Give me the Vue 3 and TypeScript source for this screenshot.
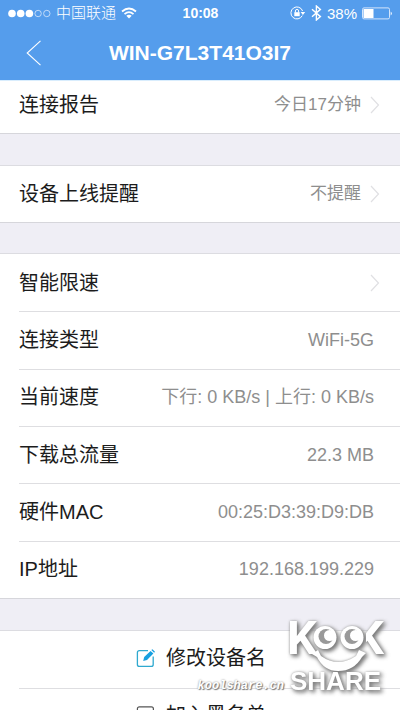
<script setup lang="ts">
interface Row {
  label: string
  value?: string
  link?: boolean
}

const groups: { name: string; rows: Row[] }[] = [
  { name: 'report', rows: [{ label: '连接报告', value: '今日17分钟', link: true }] },
  { name: 'remind', rows: [{ label: '设备上线提醒', value: '不提醒', link: true }] },
  {
    name: 'details',
    rows: [
      { label: '智能限速', link: true },
      { label: '连接类型', value: 'WiFi-5G' },
      { label: '当前速度', value: '下行: 0 KB/s | 上行: 0 KB/s' },
      { label: '下载总流量', value: '22.3 MB' },
      { label: '硬件MAC', value: '00:25:D3:39:D9:DB' },
      { label: 'IP地址', value: '192.168.199.229' },
    ],
  },
]
</script>

<template>
  <div class="screen">
    <header class="top">
      <div class="status">
        <div class="carrier">
          <svg class="dots" width="43" height="9" viewBox="0 0 43 9" aria-hidden="true">
            <g fill="#fff">
              <circle cx="4" cy="4.5" r="3.8" />
              <circle cx="12.7" cy="4.5" r="3.8" />
              <circle cx="21.4" cy="4.5" r="3.8" />
            </g>
            <g fill="none" stroke="#d9e8fb" stroke-width="0.8">
              <circle cx="30.1" cy="4.5" r="3.2" />
              <circle cx="38.8" cy="4.5" r="3.2" />
            </g>
          </svg>
          <span class="operator">中国联通</span>
          <svg width="16" height="12" viewBox="0 0 16 12" aria-hidden="true">
            <g fill="none" stroke="#fff" stroke-width="1.8">
              <path d="M1 4.5Q8-1.6 15 4.5" />
              <path d="M3.5 7.1Q8 3.2 12.5 7.1" />
            </g>
            <path d="M5.3 8.7Q8 6.6 10.7 8.7L8 11.6Z" fill="#fff" />
          </svg>
        </div>
        <time class="clock">10:08</time>
        <div class="indicators">
          <svg width="16" height="14" viewBox="0 0 16 14" aria-hidden="true">
            <path d="M12.3 9.6A6 6 0 1 1 12.6 5" fill="none" stroke="#fff" />
            <path d="M10.6 6H15.2L12.9 9Z" fill="#fff" />
            <rect x="4.3" y="6.2" width="5.4" height="4" fill="#fff" />
            <path d="M5.4 6.5V5a1.6 1.6 0 0 1 3.2 0v1.5" fill="none" stroke="#fff" />
          </svg>
          <svg class="bluetooth" width="11" height="16" viewBox="0 0 11 16" aria-hidden="true">
            <path d="M1 4.2L9.4 11.6L5.4 15V1L9.4 4.4L1 11.8" fill="none" stroke="#fff" stroke-width="1.4" />
          </svg>
          <span class="percent">38%</span>
          <svg width="31" height="13" viewBox="0 0 31 13" aria-hidden="true">
            <rect x="0.5" y="0.9" width="27" height="11" rx="1.5" fill="none" stroke="#d4e5fb" />
            <rect x="1.5" y="2" width="10" height="9" fill="#fff" />
            <path d="M28.7 4.4Q31 6.4 28.7 8.4Z" fill="#fff" />
          </svg>
        </div>
      </div>
      <div class="nav">
        <button class="back" type="button" aria-label="返回">
          <svg width="16" height="26" viewBox="0 0 16 26" aria-hidden="true">
            <path d="M14.5 0.8L1.2 13L14.5 25.2" fill="none" stroke="#fff" stroke-width="1.1" />
          </svg>
        </button>
        <h1>WIN-G7L3T41O3I7</h1>
      </div>
    </header>

    <main>
      <section v-for="group in groups" :key="group.name" class="group" :class="group.name">
        <component
          :is="row.link ? 'a' : 'div'"
          v-for="row in group.rows"
          :key="row.label"
          class="row"
          :href="row.link ? '#' : undefined"
        >
          <span class="label">{{ row.label }}</span>
          <span class="value">{{ row.value }}</span>
          <svg v-if="row.link" class="chevron" width="10" height="18" viewBox="0 0 10 18" aria-hidden="true">
            <path d="M1 1L8.5 9L1 17" fill="none" stroke="#e0e0e3" stroke-width="1.2" />
          </svg>
        </component>
      </section>

      <section class="group actions">
        <button class="action" type="button">
          <svg width="20" height="20" viewBox="0 0 20 20" aria-hidden="true">
            <path d="M12 2.6H3.4Q1.4 2.6 1.4 4.6V16.4Q1.4 18.4 3.4 18.4H15.2Q17.2 18.4 17.2 16.4V8.5" fill="none" stroke="#2fa9cf" stroke-width="1.3" />
            <path d="M7.2 12.9L8.2 9L14.6 2.9L17.4 5.6L11 11.9Z" fill="#16a0e0" />
            <path d="M15.4 2.1L16.4 1.2L19 3.7L18.1 4.8Z" fill="#16a0e0" />
          </svg>
          <span>修改设备名</span>
        </button>
        <button class="action" type="button">
          <svg width="20" height="20" viewBox="0 0 20 20" aria-hidden="true">
            <rect x="1.4" y="1.8" width="16" height="16" rx="2" fill="none" stroke="#555" stroke-width="1.2" />
            <path d="M4 5.5H5.5M7 5.5H15M4 9.5H5.5M7 9.5H15M4 13.5H5.5M7 13.5H15" stroke="#555" stroke-width="1.2" />
          </svg>
          <span>加入黑名单</span>
        </button>
      </section>
    </main>

    <div class="watermark">
      <span class="site">koolshare.cn</span>
      <svg class="brand" width="104" height="84" viewBox="0 0 104 84" role="img" aria-label="KOOK SHARE">
        <defs>
          <clipPath id="arms"><rect x="82" y="0" width="22" height="60" /></clipPath>
        </defs>
        <g fill="#fff">
          <text class="mark" x="3" y="40" font-size="47">K</text>
          <g clip-path="url(#arms)">
            <text class="mark" x="70" y="40" font-size="47">K</text>
          </g>
          <circle cx="41" cy="23.5" r="11.5" />
          <circle cx="68" cy="23.5" r="11.5" />
          <path d="M28 40L34 36L37 42Q54 54 72 42L75 36L82 39L78 43Q70 57 54 57Q40 57 33 43Z" />
          <text class="word" x="6" y="76" font-size="26">SHARE</text>
        </g>
        <circle cx="42" cy="22.5" r="7.5" fill="#999" />
        <circle cx="45.5" cy="21.5" r="5.5" fill="#fff" />
        <circle cx="68" cy="22.5" r="7.5" fill="#999" />
        <circle cx="71.5" cy="21.5" r="5.5" fill="#fff" />
      </svg>
    </div>
  </div>
</template>

<style>
body {
  margin: 0;
  background: #efeff5;
}
</style>

<style scoped>
.screen {
  position: relative;
  height: 100vh;
  overflow: hidden;
  background: #efeef5;
  color: #1c1c1c;
  font-family: "Liberation Sans", "Noto Sans CJK SC", sans-serif;
}
.top {
  background: #559dec;
  color: #fff;
}
.status {
  display: grid;
  grid-template-columns: 1fr auto 1fr;
  align-items: center;
  height: 26px;
  padding: 0 7px 0 8px;
}
.carrier,
.indicators {
  display: flex;
  align-items: center;
}
.carrier {
  gap: 5px;
}
.operator {
  font-size: 15px;
  line-height: 20px;
  font-weight: 300;
}
.clock {
  font-size: 14px;
  font-weight: 700;
}
.indicators {
  justify-content: flex-end;
  gap: 5px;
}
.percent {
  font-size: 15px;
}
.nav {
  display: grid;
  grid-template-columns: 60px 1fr 60px;
  align-items: center;
  height: 54px;
}
.back {
  display: flex;
  padding: 0 0 0 26px;
  border: 0;
  background: none;
}
h1 {
  margin: 0;
  font-size: 21px;
  line-height: 24px;
  text-align: center;
  white-space: nowrap;
}
.group {
  display: grid;
  grid-auto-rows: 1fr;
  box-sizing: border-box;
  margin-bottom: 31px;
  border-top: 1px solid #dcdce1;
  border-bottom: 1px solid #d6d6db;
  background: #fff;
}
.report {
  min-height: 54px;
  border-top-color: #d9edfd;
}
.remind {
  min-height: 58px;
  margin-bottom: 30px;
}
.details {
  min-height: 346px;
}
.row {
  display: flex;
  align-items: center;
  padding: 0 20px 0 19px;
  color: inherit;
  text-decoration: none;
}
.report .row {
  padding-bottom: 4px;
}
.row + .row,
.action + .action {
  background: linear-gradient(#dedee1, #dedee1) 19px 0 / 100% 1px no-repeat;
}
.label {
  font-size: 20px;
  line-height: 28px;
}
.value {
  margin-left: auto;
  padding-right: 6px;
  color: #8e8e8e;
  font-size: 18px;
  line-height: 24px;
  white-space: nowrap;
}
a .value {
  font-size: 17px;
}
.chevron {
  margin-left: 3px;
}
.actions {
  grid-auto-rows: 57px;
  margin-bottom: 0;
}
.action {
  display: flex;
  align-items: center;
  justify-content: center;
  gap: 10px;
  padding: 0 0 3px 2px;
  border: 0;
  background: none;
  color: inherit;
  font-family: inherit;
  font-size: 20px;
  line-height: 28px;
}
.watermark {
  position: absolute;
  right: 12px;
  bottom: 12px;
  display: flex;
  align-items: flex-end;
  pointer-events: none;
}
.site {
  padding-bottom: 4px;
  color: #fff;
  font: italic 700 12px/16px "Liberation Mono", monospace;
  text-shadow: 1px 1px 1px #777, 0 0 2px #888;
}
.brand {
  filter: drop-shadow(2px 2px 2px #777) drop-shadow(0 0 1px #aaa);
}
.mark {
  font-family: Roboto, sans-serif;
  font-weight: 700;
}
.word {
  font-family: "Liberation Sans", sans-serif;
  font-weight: 700;
}
</style>
